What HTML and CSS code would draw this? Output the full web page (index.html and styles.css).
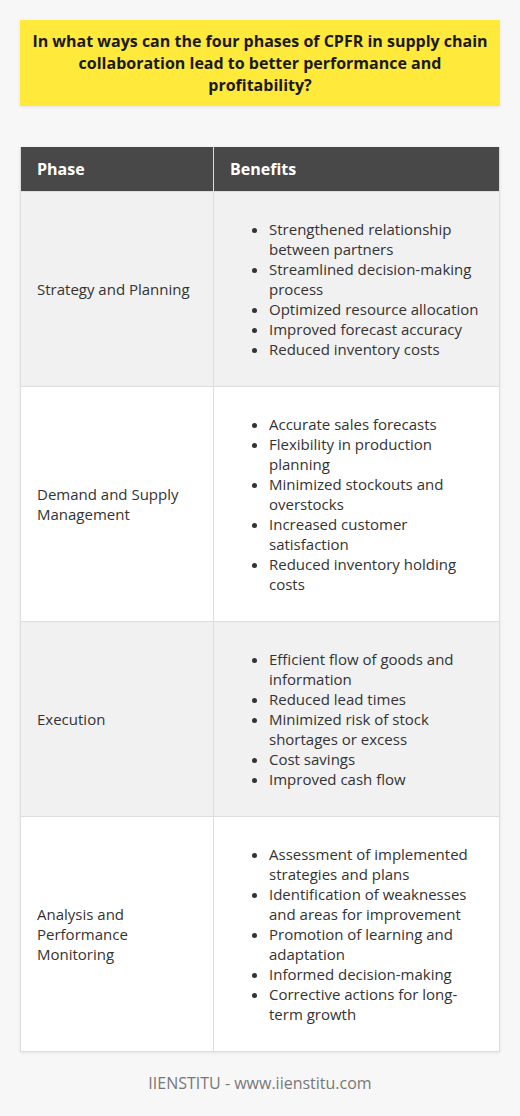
FILE: index.html
```html
<!DOCTYPE html>
<html>
<head>
<meta charset="utf-8">
<link rel="stylesheet" href="styles.css">
</head>
<body>
<div class="page">
  <div class="title">In what ways can the four phases of CPFR in supply chain collaboration lead to better performance and profitability?</div>
  <table class="grid">
    <thead>
      <tr><th class="c1">Phase</th><th>Benefits</th></tr>
    </thead>
    <tbody>
      <tr class="alt">
        <td class="c1">Strategy and Planning</td>
        <td><ul>
          <li>Strengthened relationship between partners</li>
          <li>Streamlined decision-making process</li>
          <li>Optimized resource allocation</li>
          <li>Improved forecast accuracy</li>
          <li>Reduced inventory costs</li>
        </ul></td>
      </tr>
      <tr>
        <td class="c1">Demand and Supply Management</td>
        <td><ul>
          <li>Accurate sales forecasts</li>
          <li>Flexibility in production planning</li>
          <li>Minimized stockouts and overstocks</li>
          <li>Increased customer satisfaction</li>
          <li>Reduced inventory holding costs</li>
        </ul></td>
      </tr>
      <tr class="alt">
        <td class="c1">Execution</td>
        <td><ul>
          <li>Efficient flow of goods and information</li>
          <li>Reduced lead times</li>
          <li>Minimized risk of stock shortages or excess</li>
          <li>Cost savings</li>
          <li>Improved cash flow</li>
        </ul></td>
      </tr>
      <tr>
        <td class="c1">Analysis and Performance Monitoring</td>
        <td><ul>
          <li>Assessment of implemented strategies and plans</li>
          <li>Identification of weaknesses and areas for improvement</li>
          <li>Promotion of learning and adaptation</li>
          <li>Informed decision-making</li>
          <li>Corrective actions for long-term growth</li>
        </ul></td>
      </tr>
    </tbody>
  </table>
  <div class="footer">IIENSTITU - www.iienstitu.com</div>
</div>
</body>
</html>
```

FILE: styles.css
```css
html, body {
  margin: 0;
  padding: 0;
  background: #f7f7f7;
}
body {
  font-family: "Open Sans", "Liberation Sans", sans-serif;
  color: #333;
}
.page {
  padding: 20px 20px 0 20px;
}
.title {
  background: #ffe93a;
  color: #1a1a1a;
  font-weight: 700;
  font-size: 16px;
  line-height: 22px;
  text-align: center;
  padding: 10px 10px;
  box-shadow: 0 1px 3px rgba(0,0,0,0.08);
}
.grid {
  margin-top: 41px;
  width: 480px;
  border-collapse: collapse;
  background: #fff;
  box-shadow: 0 1px 3px rgba(0,0,0,0.08);
}
.grid th {
  background: #484848;
  color: #fff;
  font-size: 16px;
  font-weight: 700;
  text-align: left;
  line-height: 22px;
  padding: 11px 16px;
  border: 1px solid #ddd;
  border-top: none;
}
.grid td {
  font-size: 15px;
  line-height: 20px;
  padding: 13px 16px;
  border: 1px solid #ddd;
  vertical-align: middle;
  color: #333;
}
.grid .c1 {
  width: 160px;
}
.grid tr.alt td {
  background: #f1f1f1;
}
.grid ul {
  margin: 14px 0;
  padding-left: 39px;
}
.footer {
  text-align: center;
  font-size: 16px;
  color: #777;
  padding: 20px 0;
}
```
